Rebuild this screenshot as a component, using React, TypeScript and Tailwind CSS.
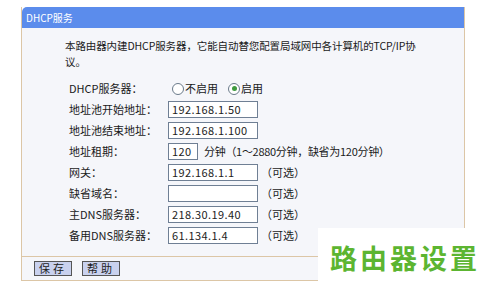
import React from "react";

const font = { fontFamily: '"SimSun","Noto Sans CJK SC","DejaVu Sans",sans-serif' };

function Field({ value, w = "w-[90px]" }: { value: string; w?: string }) {
  return (
    <div className={`${w} h-[17px] bg-white border border-[#6f7f94] px-[3px] flex items-center text-[11px] leading-none text-[#222] tracking-[0.4px]`}>
      {value}
    </div>
  );
}

function Row({ label, children }: { label: string; children: React.ReactNode }) {
  return (
    <div className="flex items-center h-[21px]">
      <div className="w-[99px] shrink-0 text-[11px] text-[#1a1a1a]">{label}</div>
      <div className="flex items-center">{children}</div>
    </div>
  );
}

const Opt = () => <span className="ml-[3px] text-[11px] text-[#1a1a1a]">（可选）</span>;

export default function App() {
  return (
    <div className="relative w-[490px] h-[288px] bg-white overflow-hidden" style={font}>
      <div className="pt-[7px] pl-[21px]">
        <div className="w-[444px] border-r border-l border-[#dcc6a6]">
          <div className="h-[21px] bg-[#5b8cec] rounded-tl-[5px] flex items-center pl-[4px] text-white text-[10px]">
            DHCP服务
          </div>
          <div className="bg-[#f5f6fa] pt-[10px] pb-[10px]">
            <div className="pl-[43px] text-[10.5px] leading-[16px] tracking-[-0.1px] text-[#1a1a1a] whitespace-nowrap">
              <div>本路由器内建DHCP服务器，它能自动替您配置局域网中各计算机的TCP/IP协</div>
              <div>议。</div>
            </div>
            <div className="pl-[47px] mt-[8px]">
              <Row label="DHCP服务器：">
                <div className="flex items-center text-[11px] text-[#1a1a1a]">
                  <span className="ml-[4px] w-[12px] h-[12px] rounded-full border border-[#6a7a8a] bg-white mr-[1px]"></span>
                  <span>不启用</span>
                  <span className="ml-[10px] w-[12px] h-[12px] rounded-full border border-[#6a7a8a] bg-white mr-[1px] flex items-center justify-center">
                    <span className="w-[5px] h-[5px] rounded-full bg-[#3f9a3f]"></span>
                  </span>
                  <span>启用</span>
                </div>
              </Row>
              <Row label="地址池开始地址：">
                <Field value="192.168.1.50" />
              </Row>
              <Row label="地址池结束地址：">
                <Field value="192.168.1.100" />
              </Row>
              <Row label="地址租期：">
                <Field value="120" w="w-[30px]" />
                <span className="ml-[6px] text-[11px] tracking-[-0.3px] text-[#1a1a1a]">分钟（1～2880分钟，缺省为120分钟）</span>
              </Row>
              <Row label="网关：">
                <Field value="192.168.1.1" />
                <Opt />
              </Row>
              <Row label="缺省域名：">
                <Field value="" />
                <Opt />
              </Row>
              <Row label="主DNS服务器：">
                <Field value="218.30.19.40" />
                <Opt />
              </Row>
              <Row label="备用DNS服务器：">
                <Field value="61.134.1.4" />
                <Opt />
              </Row>
            </div>
          </div>
          <div className="h-[25px] bg-[#f5f6fa] border-t border-b border-[#dcc6a6] flex items-center pl-[12px] gap-[10px]">
            <div className="w-[38px] h-[15px] bg-[#c9d1ee] border border-[#555] flex items-center justify-center text-[11px] tracking-[3px] text-[#222]">保存</div>
            <div className="w-[38px] h-[15px] bg-[#c9d1ee] border border-[#555] flex items-center justify-center text-[11px] tracking-[3px] text-[#222]">帮助</div>
          </div>
        </div>
      </div>
      <div className="absolute left-[318px] top-[228px] w-[172px] h-[60px] bg-white flex items-center pl-[12px]">
        <span className="text-[27px] font-bold text-[#5cb531] tracking-[3px]" style={{ fontFamily: '"Noto Sans CJK SC",sans-serif' }}>路由器设置</span>
      </div>
    </div>
  );
}
